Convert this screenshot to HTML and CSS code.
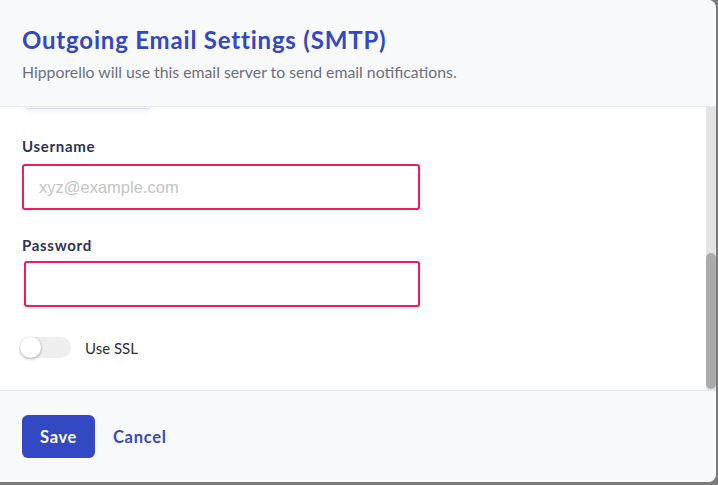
FILE: index.html
```html
<!DOCTYPE html>
<html lang="en">
<head>
<meta charset="utf-8">
<title>Outgoing Email Settings (SMTP)</title>
<link rel="stylesheet" href="styles.css">
</head>
<body>
<div class="modal">
  <header class="modal-header">
    <h1 class="title">Outgoing Email Settings (SMTP)</h1>
    <p class="subtitle">Hipporello will use this email server to send email notifications.</p>
  </header>
  <div class="modal-body">
    <div class="scroll-area">
      <div class="form">
        <div class="field">
          <label class="label">From Email</label>
          <input class="input" type="text" placeholder="notifications@example.com">
        </div>
        <div class="field">
          <label class="label">SMTP Host</label>
          <input class="input" type="text" placeholder="smtp.example.com">
        </div>
        <div class="field">
          <label class="label">Port</label>
          <input class="input input-port" type="text" placeholder="587">
        </div>
        <div class="field field-user">
          <label class="label">Username</label>
          <input class="input input-error" type="text" placeholder="xyz@example.com">
        </div>
        <div class="field field-pw">
          <label class="label">Password</label>
          <input class="input input-error input-pw" type="password">
        </div>
        <div class="toggle-row">
          <span class="toggle"><span class="knob"></span></span>
          <span class="toggle-label">Use SSL</span>
        </div>
      </div>
    </div>
    <div class="scrollbar"><div class="thumb"></div></div>
  </div>
  <footer class="modal-footer">
    <button class="btn-primary">Save</button>
    <button class="btn-link">Cancel</button>
  </footer>
</div>
</body>
</html>
```
FILE: styles.css
```css
html, body {
  margin: 0;
  padding: 0;
}
body {
  background: #7b7b7b;
  width: 718px;
  height: 485px;
  overflow: hidden;
  font-family: "Lato", "Liberation Sans", sans-serif;
}
.modal {
  width: 716px;
  height: 482px;
  background: #ffffff;
  border-radius: 0 8px 8px 0;
  display: flex;
  flex-direction: column;
  overflow: hidden;
}
.modal-header {
  background: #f8f9fb;
  height: 107px;
  box-sizing: border-box;
  border-bottom: 1px solid #e6e8ee;
  padding: 25px 22px 0;
  flex: none;
}
.title {
  margin: 0;
  font-size: 24px;
  line-height: 30px;
  font-weight: 700;
  letter-spacing: 0.8px;
  color: #3447c4;
}
.subtitle {
  margin: 7px 0 0;
  font-size: 15.8px;
  line-height: 20px;
  color: #6b7080;
}
.modal-body {
  flex: 1;
  min-height: 0;
  display: flex;
  background: #fff;
}
.scroll-area {
  flex: 1;
  min-height: 0;
  overflow: hidden;
  display: flex;
  flex-direction: column-reverse;
}
.scrollbar {
  flex: none;
  width: 10px;
  background: #e3e3e3;
  display: flex;
  flex-direction: column;
  justify-content: flex-end;
}
.thumb {
  height: 136px;
  margin-bottom: 1px;
  border-radius: 5px;
  background: #ababab;
}
.form {
  padding: 30px 22px 32px;
  display: flex;
  flex-direction: column;
  gap: 24px;
}
.field {
  display: flex;
  flex-direction: column;
  gap: 7px;
}
.field-user {
  margin-top: 3px;
}
.field-user .label {
  margin-bottom: 1px;
}
.field-pw .label {
  margin-top: 1px;
  margin-bottom: -1px;
}
.label {
  font-size: 15px;
  line-height: 20px;
  font-weight: 700;
  letter-spacing: 0.7px;
  color: #2c3558;
}
.input {
  width: 398px;
  height: 46px;
  box-sizing: border-box;
  border: 1px solid #d4d8f0;
  border-radius: 3px;
  padding: 0 15px;
  font-family: "Liberation Sans", Arial, sans-serif;
  font-size: 16.5px;
  color: #333;
  background: #fff;
  box-shadow: 0 2px 6px rgba(60, 70, 140, 0.08);
  outline: none;
}
.input::placeholder {
  color: #c4c4c4;
}
.input-port {
  width: 126px;
  margin-left: 3px;
}
.input-error {
  border: 2px solid #ec1c60;
}
.input-pw {
  margin-left: 2px;
  width: 396px;
}
.toggle-row {
  display: flex;
  align-items: center;
  gap: 14px;
  margin-top: 6px;
}
.toggle {
  position: relative;
  width: 51px;
  height: 21px;
  border-radius: 11px;
  background: #eeeeee;
  margin-left: -2px;
  flex: none;
}
.knob {
  position: absolute;
  left: 0;
  top: 0;
  width: 21px;
  height: 21px;
  border-radius: 50%;
  background: #fff;
  box-shadow: 0 1px 3px rgba(0, 0, 0, 0.35);
}
.toggle-label {
  font-size: 15px;
  color: #2f2f2f;
}
.modal-footer {
  flex: none;
  height: 92px;
  box-sizing: border-box;
  background: #f8f9fb;
  border-top: 1px solid #e6e8ee;
  padding: 24px 22px 0;
  display: flex;
  align-items: flex-start;
  gap: 18px;
}
.btn-primary {
  width: 73px;
  height: 43px;
  border: none;
  border-radius: 6px;
  background: #3349c4;
  color: #fff;
  font-family: "Lato", "Liberation Sans", sans-serif;
  font-size: 16.5px;
  font-weight: 700;
  letter-spacing: 0.6px;
  cursor: pointer;
}
.btn-link {
  height: 43px;
  border: none;
  background: transparent;
  padding: 0;
  color: #3349c4;
  font-family: "Lato", "Liberation Sans", sans-serif;
  font-size: 16.5px;
  font-weight: 700;
  letter-spacing: 0.7px;
  cursor: pointer;
}
```
